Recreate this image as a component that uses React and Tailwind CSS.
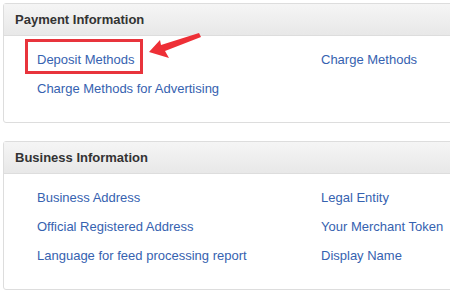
import React from "react";

const payment = [
  ["Deposit Methods", "Charge Methods"],
  ["Charge Methods for Advertising", ""],
];

const business = [
  ["Business Address", "Legal Entity"],
  ["Official Registered Address", "Your Merchant Token"],
  ["Language for feed processing report", "Display Name"],
];

const Panel = ({ title, rows, highlight }) => {
  return (
    <div className="w-[470px] border border-[#dddddd] rounded-[3px] bg-white">
      <div className="h-[32px] border-b border-[#dddddd] bg-gradient-to-b from-[#f5f5f5] to-[#e8e8e8] pl-[11px] flex items-center font-bold text-[#333333]">
        {title}
      </div>
      <div className="pt-[9px] pb-[19px] pl-[33px] grid grid-cols-[284px_1fr]">
        {rows.map((row, i) =>
          row.map((label, j) => (
            <div key={i + "-" + j} className="h-[29px] flex items-center">
              {label && (
                <a href="#" className="relative text-[#3662b0] whitespace-nowrap">
                  {label}
                  {highlight && i === 0 && j === 0 && (
                    <span className="absolute left-[-12px] top-[-11px] w-[118px] h-[35px] border-[3px] border-[#e8343c]"></span>
                  )}
                </a>
              )}
            </div>
          ))
        )}
      </div>
    </div>
  );
};

export default function App() {
  return (
    <div className="relative h-[293px] overflow-hidden bg-white pl-[3px] pt-[3px] font-['Arial','Liberation_Sans',sans-serif] text-[13px]">
      <Panel title="Payment Information" rows={payment} highlight />
      <div className="mt-[18px]">
        <Panel title="Business Information" rows={business} />
      </div>
      <svg className="absolute left-0 top-0" width="450" height="293">
        <polygon
          points="149,52 160,40 161,45 199,33 201,37 165,51 169,58"
          fill="#ee2f36"
        />
      </svg>
    </div>
  );
}
